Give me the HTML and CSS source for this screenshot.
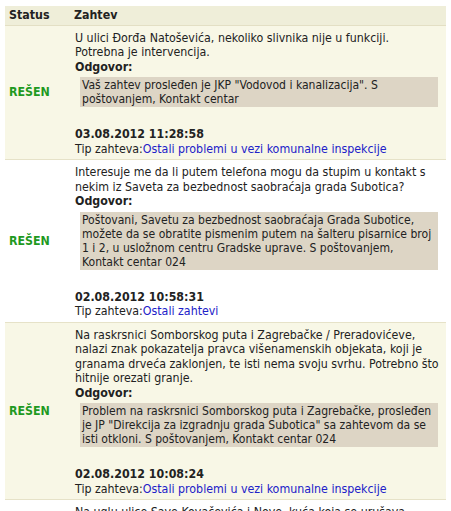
FILE: index.html
```html
<!DOCTYPE html>
<html lang="sr">
<head>
<meta charset="utf-8">
<title>Zahtevi</title>
<link rel="stylesheet" href="styles.css">
</head>
<body>
<table class="list">
  <thead>
    <tr class="head">
      <th class="c-status">Status</th>
      <th class="c-req">Zahtev</th>
    </tr>
  </thead>
  <tbody>
    <tr class="row odd">
      <td class="status">REŠEN</td>
      <td class="req">
        <div class="q">U ulici Đorđa Natoševića, nekoliko slivnika nije u funkciji. Potrebna je intervencija.</div>
        <div class="lbl">Odgovor:</div>
        <div class="ans">Vaš zahtev prosleđen je JKP "Vodovod i kanalizacija". S poštovanjem, Kontakt centar</div>
        <div class="date">03.08.2012 11:28:58</div>
        <div class="tip">Tip zahteva:<a href="#">Ostali problemi u vezi komunalne inspekcije</a></div>
      </td>
    </tr>
    <tr class="row even">
      <td class="status">REŠEN</td>
      <td class="req">
        <div class="q">Interesuje me da li putem telefona mogu da stupim u kontakt s nekim iz Saveta za bezbednost saobraćaja grada Subotica?</div>
        <div class="lbl">Odgovor:</div>
        <div class="ans">Poštovani, Savetu za bezbednost saobraćaja Grada Subotice, možete da se obratite pismenim putem na šalteru pisarnice broj 1 i 2, u usložnom centru Gradske uprave. S poštovanjem, Kontakt centar 024</div>
        <div class="date">02.08.2012 10:58:31</div>
        <div class="tip">Tip zahteva:<a href="#">Ostali zahtevi</a></div>
      </td>
    </tr>
    <tr class="row odd">
      <td class="status">REŠEN</td>
      <td class="req">
        <div class="q">Na raskrsnici Somborskog puta i Zagrebačke / Preradovićeve, nalazi znak pokazatelja pravca višenamenskih objekata, koji je granama drveća zaklonjen, te isti nema svoju svrhu. Potrebno što hitnije orezati granje.</div>
        <div class="lbl">Odgovor:</div>
        <div class="ans">Problem na raskrsnici Somborskog puta i Zagrebačke, prosleđen je JP "Direkcija za izgradnju grada Subotica" sa zahtevom da se isti otkloni. S poštovanjem, Kontakt centar 024</div>
        <div class="date">02.08.2012 10:08:24</div>
        <div class="tip">Tip zahteva:<a href="#">Ostali problemi u vezi komunalne inspekcije</a></div>
      </td>
    </tr>
    <tr class="row even">
      <td class="status">REŠEN</td>
      <td class="req">
        <div class="q">Na uglu ulice Save Kovačevića i Nove, kuća koja se urušava predstavlja opasnost za prolaznike. Molimo da se hitno reaguje.</div>
        <div class="lbl">Odgovor:</div>
        <div class="ans">Vaš zahtev prosleđen je nadležnoj službi. S poštovanjem, Kontakt centar 024</div>
        <div class="date">01.08.2012 09:12:40</div>
        <div class="tip">Tip zahteva:<a href="#">Ostali zahtevi</a></div>
      </td>
    </tr>
  </tbody>
</table>
</body>
</html>
```

FILE: styles.css
```css
html, body {
  margin: 0;
  padding: 0;
  background: #ffffff;
}
body {
  padding: 6px 5px 0 5px;
  font-family: "DejaVu Sans Condensed", "DejaVu Sans", sans-serif;
  font-size: 12.3px;
  line-height: 14.5px;
  color: #222222;
}
.list {
  width: 100%;
  border-collapse: collapse;
}
.head th {
  background: #efeed9;
  text-align: left;
  font-weight: bold;
  padding: 2px 4px 2px 4px;
  border-bottom: 1px solid #e3dfc4;
}
.c-status {
  width: 57px;
}
.row td {
  border-bottom: 1px solid #e6e2c8;
  vertical-align: middle;
}
.odd td {
  background: #f8f7e6;
}
.even td {
  background: #ffffff;
}
.status {
  color: #1f9a1f;
  font-weight: bold;
  padding-left: 4px;
}
.req {
  padding: 5px 5px 3px 5px;
}
.lbl {
  font-weight: bold;
}
.ans {
  background: #ddd5c5;
  margin: 3px 3px 0 5px;
  padding: 1px 0 1px 2px;
  font-size: 12.05px;
  line-height: 14px;
}
.date {
  font-weight: bold;
  margin-top: 20px;
}
.tip a {
  color: #2121c8;
  text-decoration: none;
}
```
